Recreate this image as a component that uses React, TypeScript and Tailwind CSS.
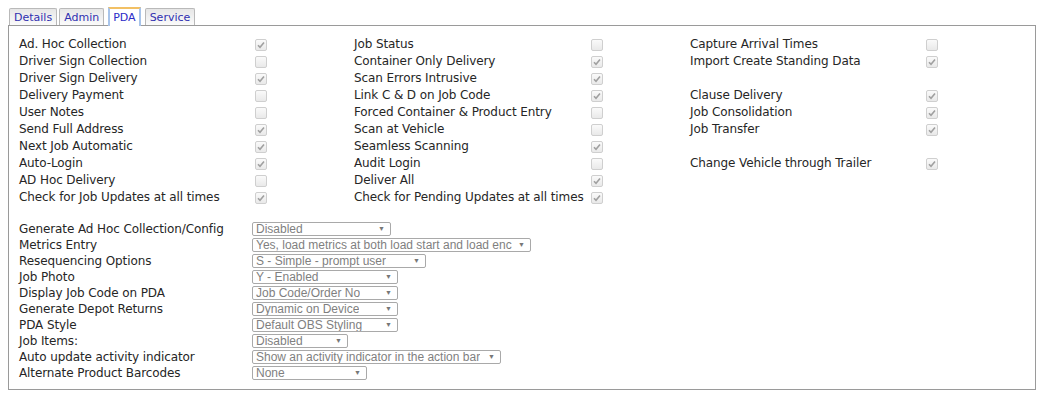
import React from 'react';

type Row = [string, boolean] | null;

const rows: [Row, Row, Row][] = [
  [['Ad. Hoc Collection', true], ['Job Status', false], ['Capture Arrival Times', false]],
  [['Driver Sign Collection', false], ['Container Only Delivery', true], ['Import Create Standing Data', true]],
  [['Driver Sign Delivery', true], ['Scan Errors Intrusive', true], null],
  [['Delivery Payment', false], ['Link C & D on Job Code', true], ['Clause Delivery', true]],
  [['User Notes', false], ['Forced Container & Product Entry', false], ['Job Consolidation', true]],
  [['Send Full Address', true], ['Scan at Vehicle', false], ['Job Transfer', true]],
  [['Next Job Automatic', true], ['Seamless Scanning', true], null],
  [['Auto-Login', true], ['Audit Login', false], ['Change Vehicle through Trailer', true]],
  [['AD Hoc Delivery', false], ['Deliver All', true], null],
  [['Check for Job Updates at all times', true], ['Check for Pending Updates at all times', true], null],
];

const selects: { label: string; value: string; width: string }[] = [
  { label: 'Generate Ad Hoc Collection/Config', value: 'Disabled', width: 'w-[139px]' },
  { label: 'Metrics Entry', value: 'Yes, load metrics at both load start and load enc', width: 'w-[279px]' },
  { label: 'Resequencing Options', value: 'S - Simple - prompt user', width: 'w-[174px]' },
  { label: 'Job Photo', value: 'Y - Enabled', width: 'w-[146px]' },
  { label: 'Display Job Code on PDA', value: 'Job Code/Order No', width: 'w-[146px]' },
  { label: 'Generate Depot Returns', value: 'Dynamic on Device', width: 'w-[146px]' },
  { label: 'PDA Style', value: 'Default OBS Styling', width: 'w-[146px]' },
  { label: 'Job Items:', value: 'Disabled', width: 'w-[96px]' },
  { label: 'Auto update activity indicator', value: 'Show an activity indicator in the action bar', width: 'w-[249px]' },
  { label: 'Alternate Product Barcodes', value: 'None', width: 'w-[115px]' },
];

const tabs = ['Details', 'Admin', 'PDA', 'Service'];

function Check({ checked }: { checked: boolean }) {
  return (
    <span className="flex h-[12px] w-[12px] items-center justify-center rounded-[2px] border border-[#cfcfcf] bg-gradient-to-b from-[#fafafa] to-[#e9e9e9]">
      {checked && (
        <svg width="8" height="8" viewBox="0 0 8 8">
          <path d="M1 4.2 L3 6.2 L7 1.5" fill="none" stroke="#a0a0a0" strokeWidth="1.6" />
        </svg>
      )}
    </span>
  );
}

function Cell({ item }: { item: Row }) {
  return (
    <>
      <div className="h-[17px] leading-[17px] whitespace-nowrap tracking-[-0.1px]">{item ? item[0] : ''}</div>
      <div className="flex h-[17px] items-center">{item && <Check checked={item[1]} />}</div>
    </>
  );
}

export default function App() {
  return (
    <div className="min-h-[399px] bg-white px-[8px] pt-[7px] font-['DejaVu_Sans',Verdana,sans-serif] text-[12px] text-[#262626]">
      <div className="flex items-end gap-[2px] pl-[1px]">
        {tabs.map((t) =>
          t === 'PDA' ? (
            <div
              key={t}
              className="relative z-10 mx-[2px] -mb-px h-[19px] border-x-2 border-t-2 border-x-[#a8c4ea] border-t-[#f2c064] bg-white px-[3px] text-[11px] leading-[18px] text-[#2a2ac8]"
            >
              {t}
            </div>
          ) : (
            <div
              key={t}
              className="h-[17px] rounded-t-[2px] border-x border-t border-[#b9b9b9] bg-gradient-to-b from-[#e6e6e6] to-[#fbfbfb] px-[4px] text-[11px] leading-[17px] text-[#3030b0]"
            >
              {t}
            </div>
          )
        )}
      </div>
      <div className="h-[365px] w-[1028px] border border-[#9a9a9a] pl-[10px] pt-[10px]">
        <div className="grid grid-cols-[236px_99px_237px_99px_236px_1fr]">
          {rows.map((r, i) => (
            <React.Fragment key={i}>
              <Cell item={r[0]} />
              <Cell item={r[1]} />
              <Cell item={r[2]} />
            </React.Fragment>
          ))}
        </div>
        <div className="mt-[15px] flex flex-col">
          {selects.map((s) => (
            <div key={s.label} className="flex h-[16px] items-center">
              <div className="w-[233px] whitespace-nowrap leading-[16px] tracking-[-0.1px]">{s.label}</div>
              <div
                className={`${s.width} flex h-[14px] items-center justify-between overflow-hidden rounded-[2px] border border-[#a9a9a9] bg-white pl-[3px] pr-[5px] font-['Liberation_Sans',Arial,sans-serif] text-[12px] leading-[12px] text-[#7f7f7f]`}
              >
                <span className="overflow-hidden whitespace-nowrap">{s.value}</span>
                <span className="ml-[4px] shrink-0 text-[7px] text-[#777]">▼</span>
              </div>
            </div>
          ))}
        </div>
      </div>
    </div>
  );
}
